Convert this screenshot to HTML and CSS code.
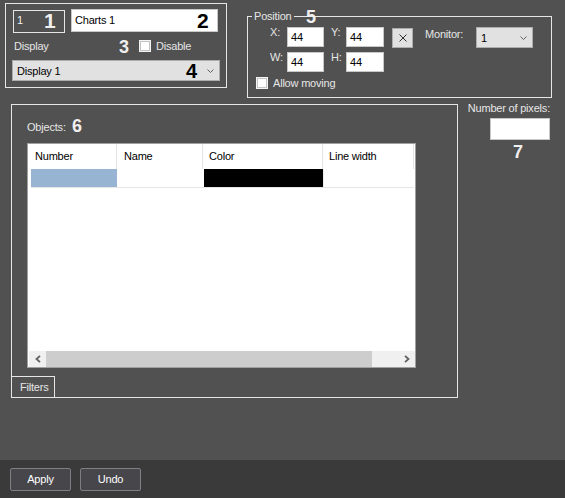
FILE: index.html
```html
<!DOCTYPE html>
<html>
<head>
<meta charset="utf-8">
<link rel="stylesheet" href="styles.css">
</head>
<body>
<div class="window">
  <div class="content">
    <div class="top-row">
      <div class="main-card">
        <div class="row1">
          <div class="field-id">1</div>
          <div class="field-name">Charts 1</div>
        </div>
        <div class="row2">
          <span class="display-label">Display</span>
          <span class="checkbox"></span>
          <span class="check-text">Disable</span>
        </div>
        <div class="combo combo-display">
          <span>Display 1</span>
          <svg class="chev" width="7" height="4" viewBox="0 0 7 4"><path d="M0.5 0.5 L3.5 3.5 L6.5 0.5" fill="none" stroke="#606060" stroke-width="1"/></svg>
        </div>
      </div>
      <div class="position">
        <div class="legend">Position</div>
        <div class="pos-row">
          <span class="lbl lbl-x">X:</span>
          <div class="num-field w37">44</div>
          <span class="lbl lbl-y">Y:</span>
          <div class="num-field w38">44</div>
          <div class="x-btn">
            <svg width="8" height="8" viewBox="0 0 8 8"><path d="M0.5 0.5 L7.5 7.5 M7.5 0.5 L0.5 7.5" stroke="#303030" stroke-width="1" fill="none"/></svg>
          </div>
          <span class="lbl lbl-mon">Monitor:</span>
          <div class="combo combo-mon">
            <span>1</span>
            <svg class="chev" width="7" height="4" viewBox="0 0 7 4"><path d="M0.5 0.5 L3.5 3.5 L6.5 0.5" fill="none" stroke="#606060" stroke-width="1"/></svg>
          </div>
        </div>
        <div class="pos-row row-b">
          <span class="lbl lbl-x">W:</span>
          <div class="num-field w37">44</div>
          <span class="lbl lbl-y">H:</span>
          <div class="num-field w38">44</div>
        </div>
        <div class="pos-row3">
          <span class="checkbox"></span>
          <span class="check-text">Allow moving</span>
        </div>
      </div>
    </div>
    <div class="mid-row">
      <div class="objects">
        <div class="obj-label">Objects:</div>
        <div class="table">
          <div class="thead">
            <div class="th c-num">Number</div>
            <div class="th c-name">Name</div>
            <div class="th c-color">Color</div>
            <div class="th c-lw">Line width</div>
          </div>
          <div class="trow">
            <div class="td td-num"></div>
            <div class="td td-name"></div>
            <div class="td td-color"></div>
            <div class="td td-lw"></div>
          </div>
          <div class="scrollbar">
            <div class="sb-btn">
              <svg width="6" height="8" viewBox="0 0 6 8"><path d="M5 0.8 L1.5 4 L5 7.2" fill="none" stroke="#606060" stroke-width="1.8"/></svg>
            </div>
            <div class="sb-thumb"></div>
            <div class="sb-track"></div>
            <div class="sb-btn">
              <svg width="6" height="8" viewBox="0 0 6 8"><path d="M1 0.8 L4.5 4 L1 7.2" fill="none" stroke="#606060" stroke-width="1.8"/></svg>
            </div>
          </div>
        </div>
        <div class="tab">Filters</div>
      </div>
      <div class="pixels">
        <div class="pix-label">Number of pixels:</div>
        <div class="pix-field"></div>
      </div>
    </div>
  </div>
  <div class="footer">
    <div class="btn">Apply</div>
    <div class="btn">Undo</div>
  </div>

  <span class="mark m1">1</span>
  <span class="mark m2">2</span>
  <span class="mark m3">3</span>
  <span class="mark m4">4</span>
  <span class="mark m5">5</span>
  <span class="mark m6">6</span>
  <span class="mark m7">7</span>
</div>
</body>
</html>
```

FILE: styles.css
```css
* { box-sizing: border-box; }

body {
  margin: 0;
  background: #515151;
  font-family: "Liberation Sans", Arial, sans-serif;
  font-size: 11px;
  letter-spacing: -0.2px;
  color: #e6e6e6;
}

.window {
  position: relative;
  width: 565px;
  height: 498px;
  display: flex;
  flex-direction: column;
  overflow: hidden;
}

.content { flex: 1; }

/* ---------- top row ---------- */
.top-row {
  display: flex;
  align-items: flex-start;
  padding: 3px 0 0 5px;
}

.main-card {
  width: 222px;
  height: 85px;
  border: 1px solid #e6e6e6;
  padding: 5px 0 0 7px;
}

.row1 { display: flex; align-items: flex-start; }

.field-id {
  width: 52px;
  height: 23px;
  margin-top: 1px;
  border: 1px solid #e6e6e6;
  padding-left: 3px;
  line-height: 19px;
  color: #f2f2f2;
}

.field-name {
  width: 147px;
  height: 23px;
  margin-left: 6px;
  background: #fff;
  border: 1px solid #c8c8c8;
  color: #000;
  padding-left: 3px;
  line-height: 20px;
}

.row2 {
  display: flex;
  align-items: center;
  height: 14px;
  margin-top: 6px;
}

.display-label {
  width: 126px;
  padding-left: 1px;
  flex: none;
}

.checkbox {
  width: 12px;
  height: 12px;
  flex: none;
  background: #fff;
  border: 1px solid #f4f4f4;
  box-shadow: inset 0 0 0 1px #c4c4c4;
}

.check-text { margin-left: 5px; }

.combo {
  display: flex;
  align-items: center;
  justify-content: space-between;
  height: 21px;
  background: #e1e1e1;
  border: 1px solid #adadad;
  color: #000;
  padding: 0 5px 0 4px;
}

.combo-display {
  width: 208px;
  margin: 7px 0 0 -1px;
}

.chev { display: block; }

/* ---------- position group ---------- */
.position {
  width: 305px;
  height: 82px;
  margin: 13px 0 0 20px;
  border: 1px solid #e6e6e6;
}

.legend {
  width: max-content;
  height: 13px;
  line-height: 13px;
  margin: -7px 0 0 4px;
  padding: 0 2px;
  background: #515151;
}

.pos-row {
  display: flex;
  align-items: flex-start;
  height: 20px;
  margin-top: 4px;
}

.pos-row.row-b { margin-top: 5px; }

.lbl {
  flex: none;
  line-height: 13px;
  margin-top: -1px;
}

.lbl-x { width: 17px; margin-left: 22px; }
.lbl-y { width: 15px; margin-left: 7px; }
.lbl-mon { width: 51px; margin-left: 12px; margin-top: 1px; }

.num-field {
  height: 20px;
  background: #fff;
  border: 1px solid #c8c8c8;
  color: #000;
  padding-left: 3px;
  line-height: 18px;
}

.w37 { width: 37px; }
.w38 { width: 38px; }

.x-btn {
  width: 21px;
  height: 20px;
  margin: 1px 0 0 8px;
  background: #e1e1e1;
  border: 1px solid #adadad;
  display: flex;
  align-items: center;
  justify-content: center;
}

.combo-mon { width: 57px; }

.pos-row3 {
  display: flex;
  align-items: center;
  height: 12px;
  margin: 5px 0 0 8px;
}

/* ---------- middle row ---------- */
.mid-row {
  display: flex;
  align-items: flex-start;
  padding-left: 11px;
}

.objects {
  width: 447px;
  height: 294px;
  margin-top: 6px;
  border: 1px solid #e6e6e6;
  display: flex;
  flex-direction: column;
}

.obj-label {
  height: 13px;
  line-height: 13px;
  margin: 16px 0 0 15px;
}

.table {
  width: 389px;
  height: 225px;
  margin: 9px 0 0 15px;
  background: #fff;
  border: 1px solid #a0a0a0;
  display: flex;
  flex-direction: column;
  color: #000;
}

.thead {
  display: flex;
  height: 25px;
}

.th {
  height: 25px;
  line-height: 25px;
  padding-left: 7px;
  border-right: 1px solid #e5e5e5;
  flex: none;
}

.c-num { width: 89px; }
.c-name { width: 86px; }
.c-color { width: 120px; padding-left: 6px; }
.c-lw { width: 91px; padding-left: 6px; }

.trow {
  display: flex;
  height: 19px;
  margin-left: 3px;
  width: 383px;
  border-bottom: 1px solid #e6e6e6;
}

.td { height: 18px; flex: none; }
.td-num { width: 86px; background: #98b4d3; }
.td-name { width: 87px; }
.td-color { width: 119px; background: #000; }
.td-lw { width: 91px; border-left: 1px solid #ececec; }

.scrollbar {
  display: flex;
  height: 16px;
  margin: auto 0 0 1px;
  background: #f0f0f0;
}

.sb-btn {
  width: 17px;
  height: 16px;
  display: flex;
  align-items: center;
  justify-content: center;
}

.sb-thumb { width: 326px; background: #cdcdcd; }
.sb-track { width: 26px; }

.tab {
  width: 44px;
  height: 21px;
  margin: 8px 0 0 -1px;
  border: 1px solid #e6e6e6;
  border-bottom: none;
  padding-left: 8px;
  line-height: 20px;
}

.pixels {
  width: 92px;
  display: flex;
  flex-direction: column;
  align-items: flex-end;
}

.pix-label {
  height: 13px;
  line-height: 13px;
  margin-top: 4px;
  white-space: nowrap;
}

.pix-field {
  width: 60px;
  height: 22px;
  margin-top: 3px;
  background: #fff;
  border: 1px solid #c8c8c8;
}

/* ---------- footer ---------- */
.footer {
  height: 38px;
  flex: none;
  background: #3b3a3b;
  display: flex;
  align-items: flex-start;
  gap: 9px;
  padding: 8px 0 0 10px;
}

.btn {
  width: 61px;
  height: 23px;
  border: 1px solid #7f7e83;
  border-radius: 2px;
  background: #47464b;
  color: #fff;
  text-align: center;
  line-height: 21px;
}

/* ---------- callout numbers ---------- */
.mark {
  position: absolute;
  font-family: "Liberation Sans", Arial, sans-serif;
  font-weight: bold;
  line-height: 1;
  letter-spacing: 0;
  color: #efefef;
}

.m1 { left: 44px; top: 10px; font-size: 21px; }
.m2 { left: 197px; top: 10px; font-size: 21px; color: #000; }
.m3 { left: 119px; top: 38px; font-size: 18px; }
.m4 { left: 186px; top: 61px; font-size: 20px; color: #000; }
.m5 { left: 306px; top: 8px; font-size: 18px; }
.m6 { left: 72px; top: 117px; font-size: 18px; }
.m7 { left: 513px; top: 143px; font-size: 18px; }
```
